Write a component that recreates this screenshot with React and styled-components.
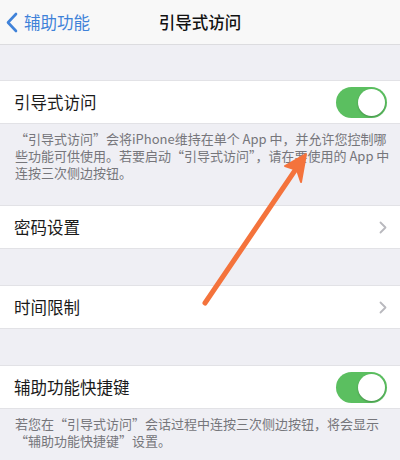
import React from 'react'
import styled, { createGlobalStyle } from 'styled-components'

const Global = createGlobalStyle`
  html, body { margin: 0; padding: 0; }
  body {
    background: #efeff4;
    font-family: "Noto Sans CJK SC", "Noto Sans", sans-serif;
    width: 400px;
    height: 460px;
    overflow: hidden;
  }
`

const Screen = styled.div`
  position: relative;
  width: 400px;
  height: 460px;
  background: #efeff4;
  display: flex;
  flex-direction: column;
`

const NavBar = styled.div`
  height: 44px;
  flex: none;
  background: #f8f8f8;
  border-bottom: 1px solid #dcdcdf;
  display: grid;
  grid-template-columns: 1fr auto 1fr;
  align-items: center;
`

const Back = styled.div`
  display: flex;
  align-items: center;
  gap: 6px;
  padding-left: 6px;
  color: #3f82d9;
  font-size: 16.5px;
`

const Title = styled.div`
  font-size: 16.5px;
  font-weight: 500;
  color: #111;
`

const Gap = styled.div`
  height: ${p => p.h}px;
  flex: none;
`

const Row = styled.div`
  height: 42px;
  flex: none;
  background: #fff;
  border-top: 1px solid #e2e2e6;
  border-bottom: 1px solid #e2e2e6;
  display: flex;
  align-items: center;
  justify-content: space-between;
  padding: 0 13px 0 14px;
`

const Label = styled.span`
  font-size: 16.5px;
  color: #1a1a1a;
`

const Switch = styled.div`
  width: 51px;
  height: 31px;
  border-radius: 16px;
  background: #5bbf60;
  position: relative;
  &::after {
    content: '';
    position: absolute;
    right: 2px;
    top: 2px;
    width: 27px;
    height: 27px;
    border-radius: 50%;
    background: #fff;
    box-shadow: 0 1px 2px rgba(0,0,0,0.25);
  }
`

const Footer = styled.div`
  padding: 6px 10px 0 15px;
  font-size: 13px;
  line-height: 17px;
  color: #76767b;
  white-space: nowrap;
  height: ${p => p.h}px;
  flex: none;
  box-sizing: border-box;
`

const Arrow = styled.svg`
  position: absolute;
  left: 0;
  top: 0;
  pointer-events: none;
`

const Chevron = () => (
  <svg width="8" height="13" viewBox="0 0 8 13">
    <path d="M1.5 1.5 L6.5 6.5 L1.5 11.5" fill="none" stroke="#b9b9be" strokeWidth="1.8" strokeLinecap="round" strokeLinejoin="round" />
  </svg>
)

export default function App() {
  return (
    <Screen>
      <Global />
      <NavBar>
        <Back>
          <svg width="12" height="21" viewBox="0 0 12 21">
            <path d="M10 2 L2 10.5 L10 19" fill="none" stroke="#3f82d9" strokeWidth="2.6" strokeLinecap="round" strokeLinejoin="round" />
          </svg>
          <span>辅助功能</span>
        </Back>
        <Title>引导式访问</Title>
        <div />
      </NavBar>
      <Gap h={35} />
      <Row>
        <Label>引导式访问</Label>
        <Switch />
      </Row>
      <Footer h={81}>
        “引导式访问”会将iPhone维持在单个 App 中，并允许您控制哪<br />
        些功能可供使用。若要启动“引导式访问”，请在要使用的 App 中<br />
        连按三次侧边按钮。
      </Footer>
      <Row>
        <Label>密码设置</Label>
        <Chevron />
      </Row>
      <Gap h={36} />
      <Row>
        <Label>时间限制</Label>
        <Chevron />
      </Row>
      <Gap h={36} />
      <Row>
        <Label>辅助功能快捷键</Label>
        <Switch />
      </Row>
      <Footer h={51}>
        若您在“引导式访问”会话过程中连按三次侧边按钮，将会显示<br />
        “辅助功能快捷键”设置。
      </Footer>
      <Arrow width="400" height="460" viewBox="0 0 400 460">
        <line x1="205" y1="303" x2="298" y2="166" stroke="#f4733c" strokeWidth="5" strokeLinecap="round" />
        <path d="M306 154 L285 166 L297 170 L301 182 Z" fill="#f4733c" stroke="#f4733c" strokeWidth="2" strokeLinejoin="round" />
      </Arrow>
    </Screen>
  )
}
